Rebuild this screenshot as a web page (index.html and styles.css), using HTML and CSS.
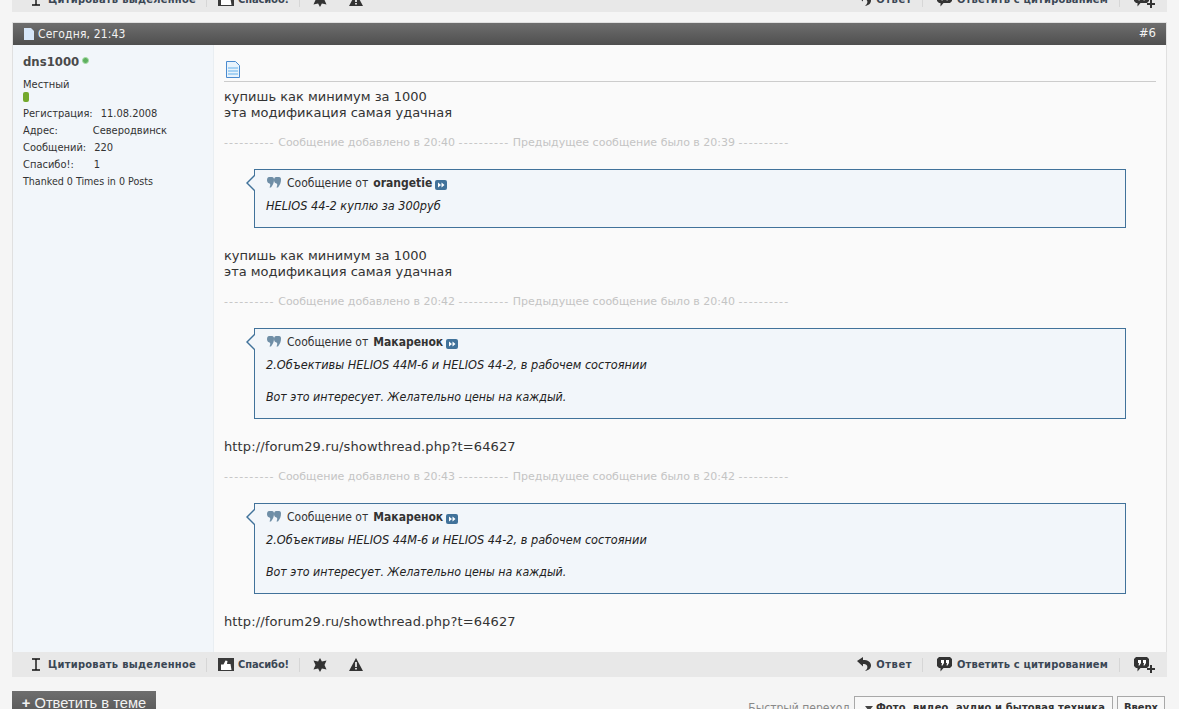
FILE: index.html
```html
<!DOCTYPE html>
<html lang="ru">
<head>
<meta charset="utf-8">
<title>Форум</title>
<link rel="stylesheet" href="styles.css">
</head>
<body>
<div class="toolbar toolbar-top">
  <div class="tools">
    <a class="tool tool-first"><svg class="ic" width="10" height="13" viewBox="0 0 10 13"><path d="M1 1h8M1 12h8M5 1v11" fill="none" stroke="#111" stroke-width="1.4"/></svg><span class="sp-quote">Цитировать выделенное</span></a>
    <a class="tool"><svg class="ic" width="16" height="13" viewBox="0 0 16 13"><path fill="#3a3a3a" d="M0 0h16v13H0z"/><path fill="#fff" d="M3 12V6.500h2.500L7.500 2.500l2 .5-.5 3h3.500l1 6z"/></svg><span class="sp-thx">Спасибо!</span></a>
    <a class="tool tool-icon"><svg width="14" height="14" viewBox="0 0 14 14"><path fill="#333" d="M7 0l1.900 3.400L13.500 2.600 11.500 7l2 4.400-4.600-.8L7 14l-1.900-3.400-4.600.8 2-4.400-2-4.400 4.600.8z"/></svg></a>
    <a class="tool tool-plain"><svg width="14" height="13" viewBox="0 0 14 13"><path fill="#333" d="M7 0l7 13H0z"/><path stroke="#fff" stroke-width="1.600" d="M7 4v5M7 10v1.500"/></svg></a>
  </div>
  <div class="tools">
    <a class="tool"><svg class="ic" width="15" height="15" viewBox="0 0 15 15"><path fill="#333" d="M0 4l6-4v3c5 0 8 2 8 5.500 0 3-2.500 5-6 5.500 2-1.500 3-3.500 2-5.500-.8-1.200-2.500-1.500-4-1.500v2.500z"/></svg><span class="sp-ans">Ответ</span></a>
    <a class="tool tool-wide"><svg class="ic" width="15" height="15" viewBox="0 0 15 15"><path fill="#333" d="M2 0h11l2 2v7l-2 2H6.500l-3 3.500V11H2L0 9V2z"/><path fill="#fff" d="M4 3h3v3L5.500 8.500H4.500L5 6H4zM9 3h3v3l-1.500 2.500h-1L10 6H9z"/></svg><span class="sp-full">Ответить с цитированием</span></a>
    <a class="tool tool-last"><svg width="21" height="16" viewBox="0 0 21 16"><path fill="#333" d="M2 0h11l2 2v7l-2 2H6.500l-3 3.500V11H2L0 9V2z"/><path fill="#fff" d="M4 3h3v3L5.500 8.500H4.500L5 6H4zM9 3h3v3l-1.500 2.500h-1L10 6H9z"/><path fill="#333" d="M16 8h2v3h3v2h-3v3h-2v-3h-3v-2h3z"/></svg></a>
  </div>
</div>

<div class="post">
  <div class="post-head">
    <span class="post-date"><svg class="doc-small" width="12" height="12" viewBox="0 0 12 12"><path fill="#d6e6f8" d="M1 0h7l3 3v9H1z"/></svg><span class="date-text">Сегодня, 21:43</span></span>
    <span class="post-num">#6</span>
  </div>
  <div class="post-body">
    <aside class="user">
      <div class="user-name">dns1000<span class="online"></span></div>
      <div class="user-title">Местный</div>
      <div class="rep"></div>
      <div class="info"><span>Регистрация:</span><span class="v v-reg">11.08.2008</span></div>
      <div class="info"><span>Адрес:</span><span class="v v-addr">Северодвинск</span></div>
      <div class="info"><span>Сообщений:</span><span class="v v-msg">220</span></div>
      <div class="info"><span>Спасибо!:</span><span class="v v-thx">1</span></div>
      <div class="info info-en">Thanked 0 Times in 0 Posts</div>
    </aside>
    <main class="content">
      <div class="msg-icon"><svg width="16" height="17" viewBox="0 0 16 17"><path fill="#e8f3fc" stroke="#4a8bd0" d="M1.500.500h9l4 4v12h-13z"/><path fill="#a6d2f4" d="M3 6h10v2H3zM3 9h10v2H3zM3 12h10v2H3z"/></svg></div>
      <p class="text">купишь как минимум за 1000<br>эта модификация самая удачная</p>
      <p class="merge"><span class="dash">----------</span> Сообщение добавлено в 20:40 <span class="dash">----------</span> Предыдущее сообщение было в 20:39 <span class="dash">----------</span></p>
      <blockquote class="quote">
        <div class="quote-head"><svg class="q-mark" width="14" height="11" viewBox="0 0 14 11"><path fill="#6f8ea6" d="M2 0h3c1.500 0 2 1 2 2.500 0 3-1 5.500-3 8H2.500C3.500 8 3.500 7 2.500 6.500 .5 6 0 4.500 0 3 0 1 1 0 2 0zM9 0h3c1.500 0 2 1 2 2.500 0 3-1 5.500-3 8H9.500C10.500 8 10.500 7 9.500 6.500 7.500 6 7 4.500 7 3 7 1 8 0 9 0z"/></svg>Сообщение от <b>orangetie</b><svg class="q-go" width="12" height="10" viewBox="0 0 12 10"><rect width="12" height="10" rx="2" fill="#41729a"/><path fill="#fff" d="M3 2.500L6 5 3 7.500zM6.500 2.500L9.500 5 6.500 7.500z"/></svg></div>
        <div class="quote-msg"><i>HELIOS 44-2 куплю за 300руб</i></div>
      </blockquote>
      <p class="text">купишь как минимум за 1000<br>эта модификация самая удачная</p>
      <p class="merge"><span class="dash">----------</span> Сообщение добавлено в 20:42 <span class="dash">----------</span> Предыдущее сообщение было в 20:40 <span class="dash">----------</span></p>
      <blockquote class="quote">
        <div class="quote-head"><svg class="q-mark" width="14" height="11" viewBox="0 0 14 11"><path fill="#6f8ea6" d="M2 0h3c1.500 0 2 1 2 2.500 0 3-1 5.500-3 8H2.500C3.500 8 3.500 7 2.500 6.500 .5 6 0 4.500 0 3 0 1 1 0 2 0zM9 0h3c1.500 0 2 1 2 2.500 0 3-1 5.500-3 8H9.500C10.500 8 10.500 7 9.500 6.500 7.500 6 7 4.500 7 3 7 1 8 0 9 0z"/></svg>Сообщение от <b>Макаренок</b><svg class="q-go" width="12" height="10" viewBox="0 0 12 10"><rect width="12" height="10" rx="2" fill="#41729a"/><path fill="#fff" d="M3 2.500L6 5 3 7.500zM6.500 2.500L9.500 5 6.500 7.500z"/></svg></div>
        <div class="quote-msg"><i>2.Объективы HELIOS 44М-6 и HELIOS 44-2, в рабочем состоянии<br><br><span class="quote-line">Вот это интересует. Желательно цены на каждый.</span></i></div>
      </blockquote>
      <p class="text text-url">http://forum29.ru/showthread.php?t=64627</p>
      <p class="merge"><span class="dash">----------</span> Сообщение добавлено в 20:43 <span class="dash">----------</span> Предыдущее сообщение было в 20:42 <span class="dash">----------</span></p>
      <blockquote class="quote">
        <div class="quote-head"><svg class="q-mark" width="14" height="11" viewBox="0 0 14 11"><path fill="#6f8ea6" d="M2 0h3c1.500 0 2 1 2 2.500 0 3-1 5.500-3 8H2.500C3.500 8 3.500 7 2.500 6.500 .5 6 0 4.500 0 3 0 1 1 0 2 0zM9 0h3c1.500 0 2 1 2 2.500 0 3-1 5.500-3 8H9.500C10.500 8 10.500 7 9.500 6.500 7.500 6 7 4.500 7 3 7 1 8 0 9 0z"/></svg>Сообщение от <b>Макаренок</b><svg class="q-go" width="12" height="10" viewBox="0 0 12 10"><rect width="12" height="10" rx="2" fill="#41729a"/><path fill="#fff" d="M3 2.500L6 5 3 7.500zM6.500 2.500L9.500 5 6.500 7.500z"/></svg></div>
        <div class="quote-msg"><i>2.Объективы HELIOS 44М-6 и HELIOS 44-2, в рабочем состоянии<br><br><span class="quote-line">Вот это интересует. Желательно цены на каждый.</span></i></div>
      </blockquote>
      <p class="text text-url">http://forum29.ru/showthread.php?t=64627</p>
    </main>
  </div>
</div>

<div class="toolbar">
  <div class="tools">
    <a class="tool tool-first"><svg class="ic" width="10" height="13" viewBox="0 0 10 13"><path d="M1 1h8M1 12h8M5 1v11" fill="none" stroke="#111" stroke-width="1.4"/></svg><span class="sp-quote">Цитировать выделенное</span></a>
    <a class="tool"><svg class="ic" width="16" height="13" viewBox="0 0 16 13"><path fill="#3a3a3a" d="M0 0h16v13H0z"/><path fill="#fff" d="M3 12V6.500h2.500L7.500 2.500l2 .5-.5 3h3.500l1 6z"/></svg><span class="sp-thx">Спасибо!</span></a>
    <a class="tool tool-icon"><svg width="14" height="14" viewBox="0 0 14 14"><path fill="#333" d="M7 0l1.900 3.400L13.500 2.600 11.500 7l2 4.400-4.600-.8L7 14l-1.900-3.400-4.600.8 2-4.400-2-4.400 4.600.8z"/></svg></a>
    <a class="tool tool-plain"><svg width="14" height="13" viewBox="0 0 14 13"><path fill="#333" d="M7 0l7 13H0z"/><path stroke="#fff" stroke-width="1.600" d="M7 4v5M7 10v1.500"/></svg></a>
  </div>
  <div class="tools">
    <a class="tool"><svg class="ic" width="15" height="15" viewBox="0 0 15 15"><path fill="#333" d="M0 4l6-4v3c5 0 8 2 8 5.500 0 3-2.500 5-6 5.500 2-1.500 3-3.500 2-5.500-.8-1.200-2.500-1.500-4-1.500v2.500z"/></svg><span class="sp-ans">Ответ</span></a>
    <a class="tool tool-wide"><svg class="ic" width="15" height="15" viewBox="0 0 15 15"><path fill="#333" d="M2 0h11l2 2v7l-2 2H6.500l-3 3.500V11H2L0 9V2z"/><path fill="#fff" d="M4 3h3v3L5.500 8.500H4.500L5 6H4zM9 3h3v3l-1.500 2.500h-1L10 6H9z"/></svg><span class="sp-full">Ответить с цитированием</span></a>
    <a class="tool tool-last"><svg width="21" height="16" viewBox="0 0 21 16"><path fill="#333" d="M2 0h11l2 2v7l-2 2H6.500l-3 3.500V11H2L0 9V2z"/><path fill="#fff" d="M4 3h3v3L5.500 8.500H4.500L5 6H4zM9 3h3v3l-1.500 2.500h-1L10 6H9z"/><path fill="#333" d="M16 8h2v3h3v2h-3v3h-2v-3h-3v-2h3z"/></svg></a>
  </div>
</div>

<div class="below">
  <a class="reply-btn"><b>+</b> Ответить в теме</a>
  <div class="jump">
    <span class="jump-label">Быстрый переход</span>
    <span class="jump-btn jump-forum"><span class="caret"></span>Фото, видео, аудио и бытовая техника</span>
    <span class="jump-btn">Вверх</span>
  </div>
</div>
</body>
</html>
```

FILE: styles.css
```css
html, body {
  margin: 0;
  height: 709px;
  overflow: hidden;
  background: #f5f5f5;
}
body {
  padding: 0 12px;
  font-family: "DejaVu Sans", sans-serif;
  color: #333;
}
.toolbar {
  display: flex;
  justify-content: space-between;
  align-items: center;
  height: 25px;
  background: #e8e8e8;
}
.toolbar-top {
  margin-top: -13px;
}
.tools {
  display: flex;
  align-items: center;
}
.tool {
  display: flex;
  align-items: center;
  gap: 4px;
  height: 14px;
  padding: 0 10px 0 11px;
  border-right: 1px solid #d6d6d6;
  font: bold 11px/14px "DejaVu Sans Condensed", "DejaVu Sans", sans-serif;
  color: #3a4654;
  white-space: nowrap;
}
.tool-first {
  padding-left: 19px;
  gap: 7px;
}
.tool-icon {
  border-right: 0;
  padding: 0 11px 0 13px;
}
.tool-plain {
  border-right: 0;
  padding: 0 11px;
}
.tool-wide {
  padding: 0 11px 0 14px;
  gap: 5px;
}
.tool-last {
  border-right: 0;
  padding: 0 12px 0 14px;
}
.sp-quote { letter-spacing: .28px; }
.sp-thx { letter-spacing: -.1px; }
.sp-ans { letter-spacing: .55px; }
.sp-full { letter-spacing: .18px; }
.post {
  margin-top: 10px;
  border: 1px solid #e0e0e0;
  border-bottom: 0;
  background: #fafafa;
}
.post-head {
  display: flex;
  justify-content: space-between;
  align-items: center;
  height: 22px;
  padding: 0 10px;
  background: linear-gradient(#6e6e6e, #4f4f4f);
  color: #f2f2f2;
  font: 12px/16px "DejaVu Sans Condensed", "DejaVu Sans", sans-serif;
}
.post-date {
  display: flex;
  align-items: center;
  gap: 3px;
}
.date-text {
  letter-spacing: .15px;
}
.post-num {
  padding-bottom: 2px;
  font-size: 13px;
}
.post-body {
  display: flex;
  height: 607px;
}
.user {
  width: 190px;
  flex: none;
  padding: 8px 0 0 10px;
  background: #f2f6fa;
  border-right: 1px solid #e9eef2;
  font: 11px/17px "DejaVu Sans Condensed", "DejaVu Sans", sans-serif;
  color: #333;
}
.user-name {
  display: flex;
  align-items: center;
  height: 17px;
  font: bold 13px/17px "DejaVu Sans Condensed", "DejaVu Sans", sans-serif;
  color: #4a4a4a;
}
.online {
  width: 5px;
  height: 5px;
  margin: -3px 0 0 3px;
  border: 1px solid #a6dca6;
  border-radius: 50%;
  background: #5fb05f;
}
.user-title {
  margin-top: 8px;
  line-height: 14px;
}
.rep {
  width: 6px;
  height: 10px;
  margin: 0 0 3px 0;
  border-radius: 2px;
  background: #74a92c;
}
.info-en {
  font-size: 10.600px;
}
.v-reg { margin-left: 8px; }
.v-addr { margin-left: 35px; }
.v-msg { margin-left: 8px; }
.v-thx { margin-left: 20px; }
.content {
  flex: 1;
  min-width: 0;
  padding: 16px 10px 0;
}
.msg-icon {
  height: 20px;
  padding-left: 1px;
  border-bottom: 1px solid #cccccc;
}
.text {
  margin: 7px 0 0;
  font-size: 13px;
  line-height: 16px;
  color: #333;
}
.text-url {
  letter-spacing: .13px;
}
.merge {
  margin: 14px 0 -1px;
  font-size: 11px;
  line-height: 16px;
  color: #c4c4c4;
  white-space: nowrap;
}
.dash {
  letter-spacing: 1.100px;
}
.quote {
  position: relative;
  margin: 19px 30px 20px;
  padding: 5px 12px 13px 11px;
  border: 1px solid #41729a;
  background: #f2f6fa;
  font: 12px/16px "DejaVu Sans Condensed", "DejaVu Sans", sans-serif;
}
.quote::before,
.quote::after {
  content: "";
  position: absolute;
  top: 5px;
  border-style: solid;
  border-color: transparent;
  border-width: 8px 8px 8px 0;
}
.quote::before {
  left: -9px;
  border-right-color: #41729a;
}
.quote::after {
  left: -7px;
  border-right-color: #f2f6fa;
}
.quote + .text {
  margin-top: 20px;
}
.quote-head {
  display: flex;
  align-items: center;
  height: 16px;
  color: #333;
}
.quote-head b {
  margin-left: 5px;
}
.q-mark {
  margin: -1px 6px 0 1px;
}
.q-go {
  margin: 3px 0 0 3px;
}
.quote-msg {
  margin-top: 7px;
  font-size: 12.600px;
  color: #222;
}
.quote-line {
  font-size: 12.300px;
}
.below {
  display: flex;
  justify-content: space-between;
  align-items: flex-start;
  margin-top: 14px;
}
.reply-btn {
  width: 144px;
  height: 32px;
  box-sizing: border-box;
  padding-top: 4px;
  text-align: center;
  background: linear-gradient(#6e6e6e, #4f4f4f);
  color: #f2f2f2;
  font: 14.700px/16px "Liberation Sans", sans-serif;
}
.jump {
  display: flex;
  align-items: center;
  gap: 4px;
  margin: 5px 2px 0 0;
  font: 12px/18px "DejaVu Sans Condensed", "DejaVu Sans", sans-serif;
  color: #888;
}
.jump-btn {
  display: flex;
  align-items: center;
  padding: 0 6px;
  height: 24px;
  box-sizing: border-box;
  border: 1px solid #a8a8a8;
  background: #f8f8f8;
  color: #333;
  font: bold 11px/18px "DejaVu Sans Condensed", "DejaVu Sans", sans-serif;
}
.jump-forum {
  padding: 0 7px 0 10px;
  letter-spacing: .14px;
}
.caret {
  width: 0;
  height: 0;
  margin-right: 3px;
  border: 4px solid transparent;
  border-top: 5px solid #444;
  border-bottom: 0;
}
```
